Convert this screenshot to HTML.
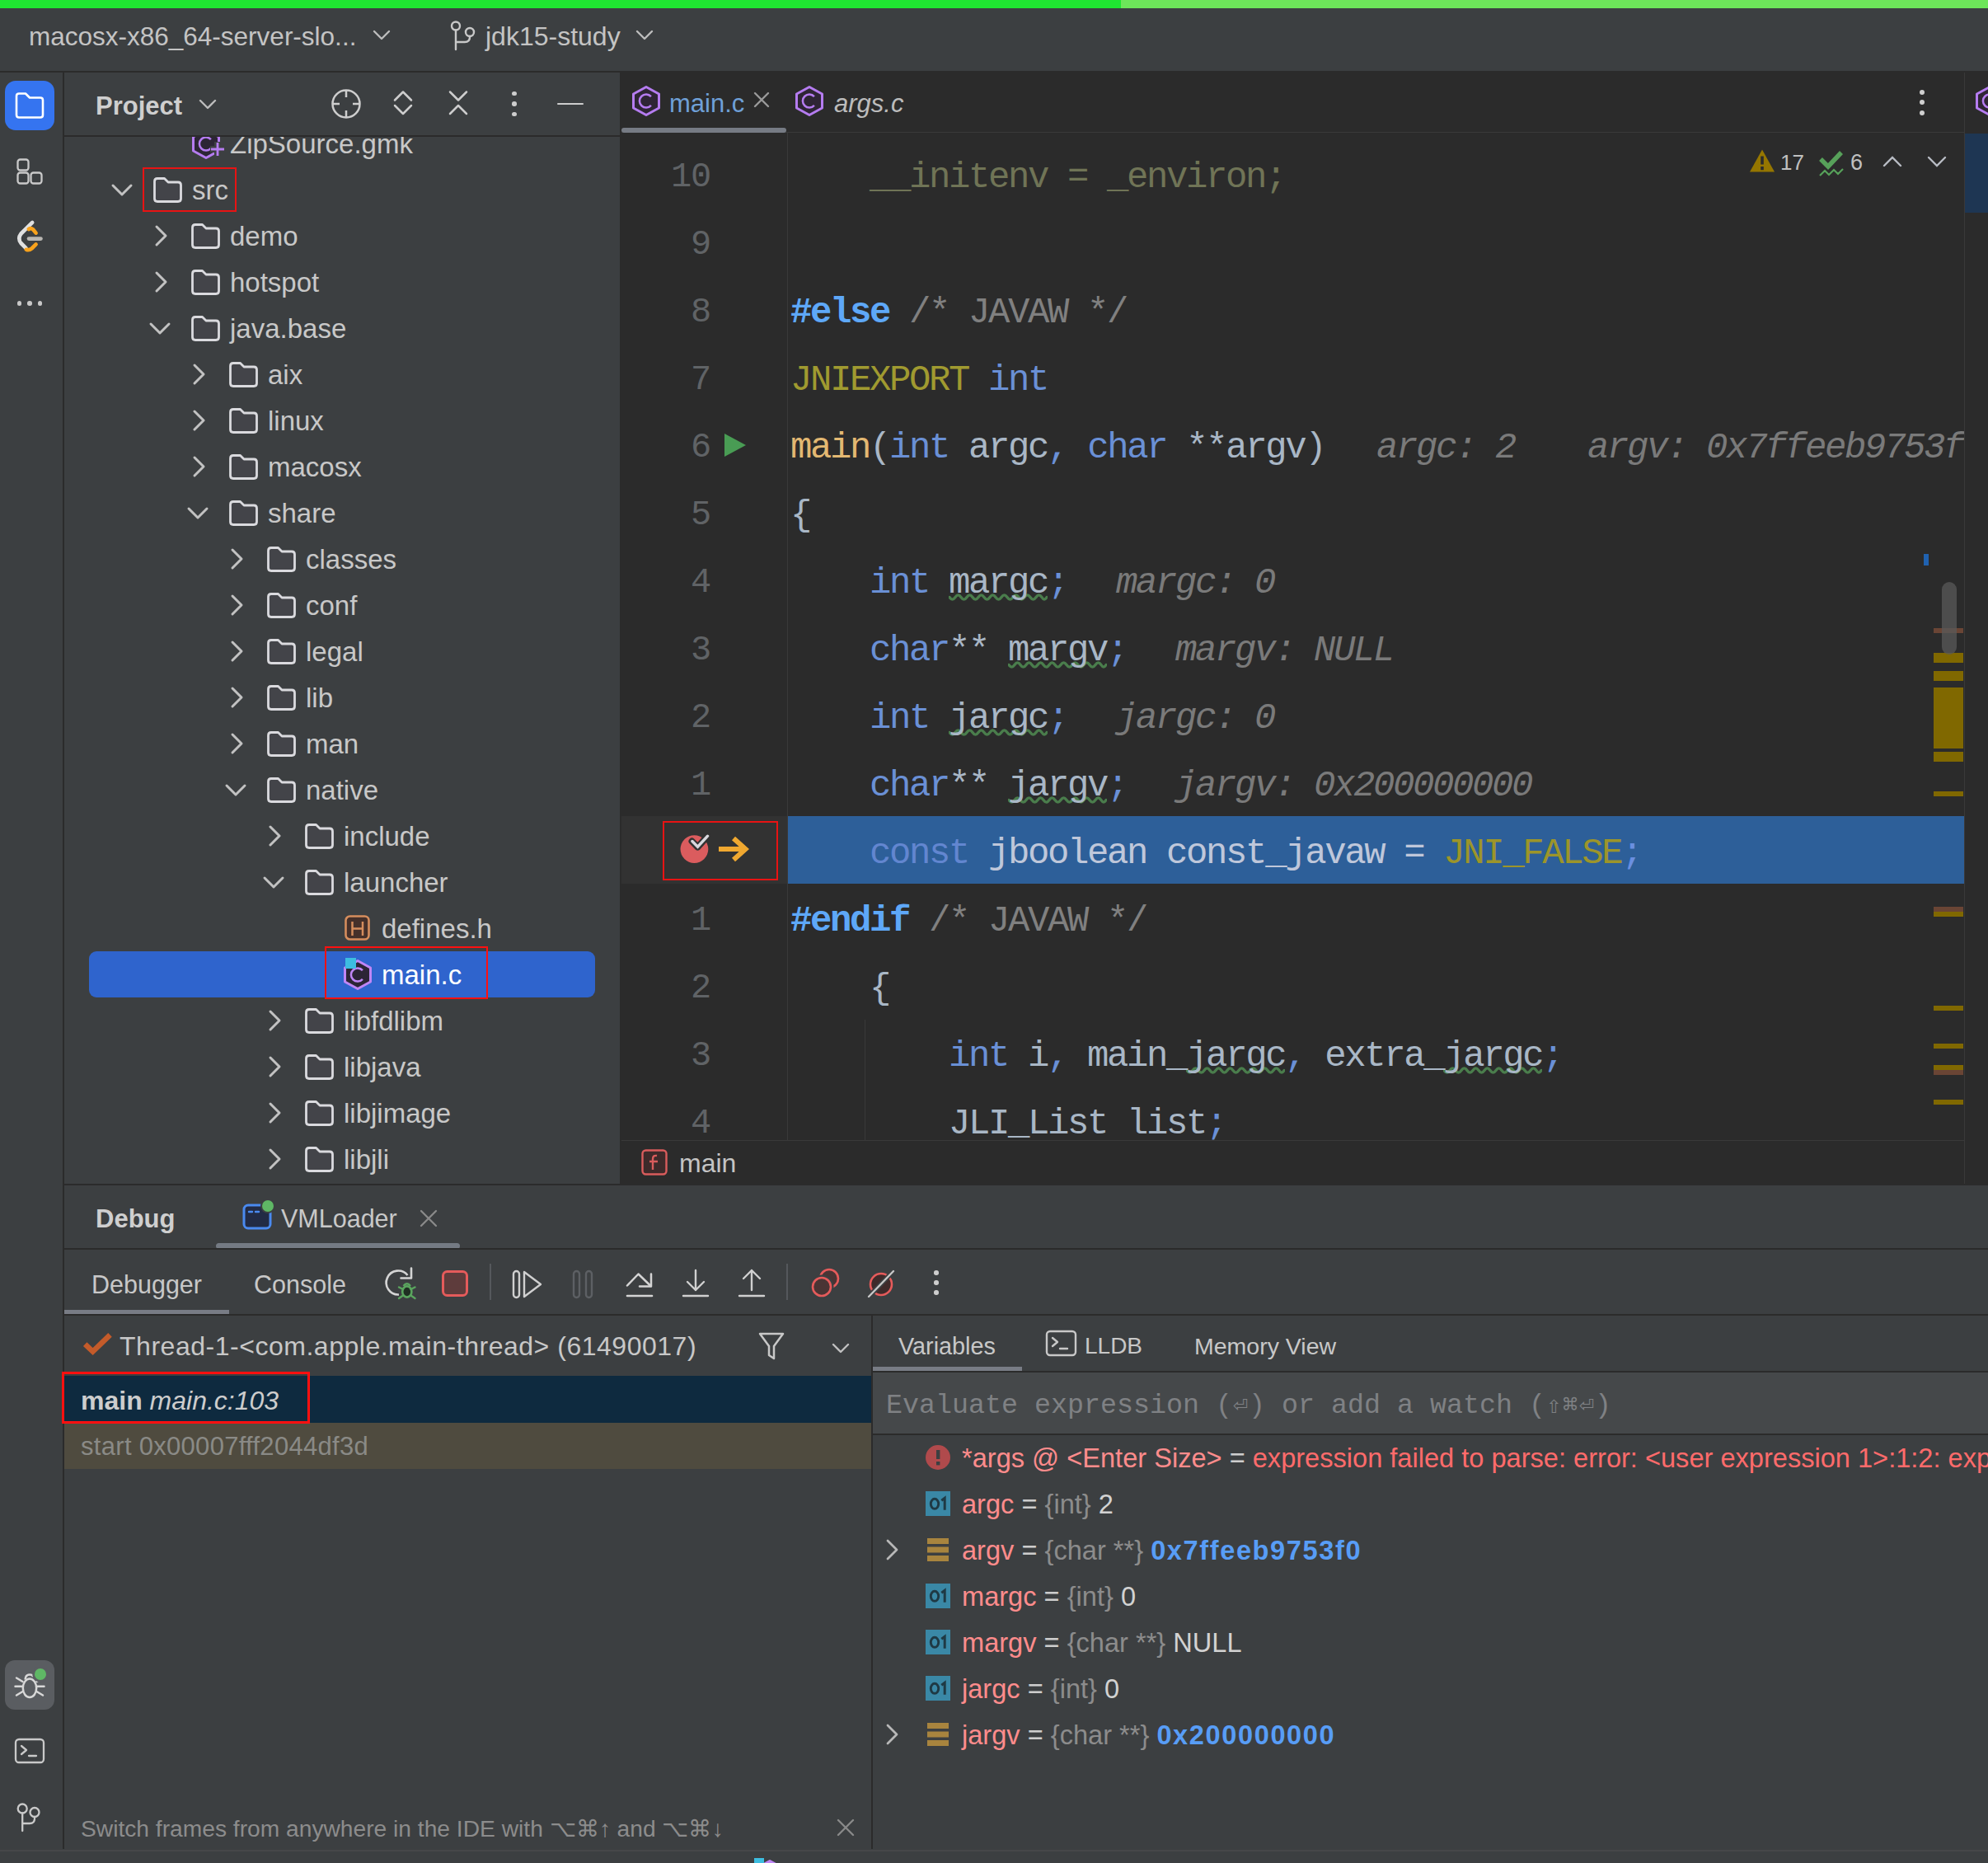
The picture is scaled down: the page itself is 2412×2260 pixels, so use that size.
<!DOCTYPE html>
<html><head><meta charset="utf-8"><style>
html,body{margin:0;padding:0;}
body{width:2412px;height:2260px;overflow:hidden;position:relative;background:#3c3f41;font-family:'Liberation Sans', sans-serif;-webkit-font-smoothing:antialiased;}
.cl{position:absolute;left:205px;height:60px;line-height:60px;font-family:'Liberation Mono', monospace;font-size:44px;letter-spacing:-2.4px;white-space:pre;}
.ln{position:absolute;left:0;width:108px;text-align:right;height:60px;line-height:60px;font-family:'Liberation Mono', monospace;font-size:42px;letter-spacing:-1.2px;color:#606366;white-space:pre;}
.ln{left:754px;}
.sy{display:inline-block;width:20px;text-align:center;font-style:normal;font-size:30px;}
</style></head><body>
<div style="position:absolute;left:0px;top:0px;width:1360px;height:10px;background:#1fe631;"></div>
<div style="position:absolute;left:1360px;top:0px;width:1052px;height:10px;background:#6de55a;"></div>
<div style="position:absolute;left:0px;top:10px;width:2412px;height:76px;background:#3c3f41;"></div>
<div style="position:absolute;left:0px;top:86px;width:2412px;height:2px;background:#2b2b2b;"></div>
<div style="position:absolute;left:35px;top:24.0px;height:40px;line-height:40px;font-family:'Liberation Sans', sans-serif;font-size:31.5px;color:#c4c4c4;font-weight:normal;font-style:normal;white-space:pre;">macosx-x86_64-server-slo...</div>
<svg style="position:absolute;left:450.0px;top:33.5px;" width="26" height="17" viewBox="0 0 26 17" fill="none"><path d="M4 4 L13.0 13 L22 4" stroke="#bdbdbd" stroke-width="2.4" stroke-linecap="round" stroke-linejoin="round"/></svg>
<svg style="position:absolute;left:544px;top:24px;" width="34" height="38" viewBox="0 0 34 38" fill="none"><circle cx="9" cy="7.5" r="5" stroke="#c8c8c8" stroke-width="2.4"/><circle cx="26" cy="15" r="5" stroke="#c8c8c8" stroke-width="2.4"/><path d="M9 12.5 V36 M9 27 H20 Q26 27 26 21 V20" stroke="#c8c8c8" stroke-width="2.4" stroke-linecap="round"/></svg>
<div style="position:absolute;left:589px;top:23.5px;height:41px;line-height:41px;font-family:'Liberation Sans', sans-serif;font-size:32px;color:#c4c4c4;font-weight:normal;font-style:normal;white-space:pre;">jdk15-study</div>
<svg style="position:absolute;left:769.0px;top:33.5px;" width="26" height="17" viewBox="0 0 26 17" fill="none"><path d="M4 4 L13.0 13 L22 4" stroke="#bdbdbd" stroke-width="2.4" stroke-linecap="round" stroke-linejoin="round"/></svg>
<div style="position:absolute;left:0px;top:88px;width:76px;height:2155px;background:#3c3f41;"></div>
<div style="position:absolute;left:76px;top:88px;width:2px;height:2155px;background:#2b2b2b;"></div>
<div style="position:absolute;left:6px;top:98px;width:60px;height:60px;background:#3574f0;border-radius:13px;"></div>
<svg style="position:absolute;left:16px;top:110px;" width="40" height="36" viewBox="0 0 40 36" fill="none"><path d="M4 6.5 Q4 3.5 7 3.5 H15 L20 8.5 H33 Q36 8.5 36 11.5 V29.5 Q36 32.5 33 32.5 H7 Q4 32.5 4 29.5 Z" stroke="#ffffff" stroke-width="2.6" stroke-linejoin="round"/></svg>
<svg style="position:absolute;left:18px;top:190px;" width="36" height="36" viewBox="0 0 36 36" fill="none"><rect x="3.5" y="3.5" width="13" height="13" rx="3" stroke="#c9c9c9" stroke-width="2.3"/><rect x="3.5" y="19.5" width="13" height="13" rx="3" stroke="#c9c9c9" stroke-width="2.3"/><rect x="19.5" y="19.5" width="13" height="13" rx="3" stroke="#c9c9c9" stroke-width="2.3"/></svg>
<svg style="position:absolute;left:16px;top:264px;" width="40" height="46" viewBox="0 0 40 46" fill="none"><path d="M23.2 5.9 L9.5 19.5 Q5 25.4 9.5 31 L15.5 37" stroke="#e0e0e0" stroke-width="4.6" stroke-linecap="round" stroke-linejoin="round"/><path d="M18.8 14 Q21.5 12.2 24 14.2 L27.6 18.6 M15.8 38.8 Q19.5 40 22.5 37.5 L27.6 32.4" stroke="#f8a21c" stroke-width="4.6" stroke-linecap="round"/><path d="M19 25.6 H33.5" stroke="#b8b6b2" stroke-width="4.6" stroke-linecap="round"/></svg>
<div style="position:absolute;left:20.7px;top:365.2px;width:5.6px;height:5.6px;background:#c8c8c8;border-radius:50%;"></div>
<div style="position:absolute;left:33.2px;top:365.2px;width:5.6px;height:5.6px;background:#c8c8c8;border-radius:50%;"></div>
<div style="position:absolute;left:45.7px;top:365.2px;width:5.6px;height:5.6px;background:#c8c8c8;border-radius:50%;"></div>
<div style="position:absolute;left:6px;top:2014px;width:60px;height:60px;background:#5a5d61;border-radius:12px;"></div>
<svg style="position:absolute;left:14px;top:2022px;" width="44" height="44" viewBox="0 0 44 44" fill="none"><ellipse cx="22" cy="25.8" rx="8.2" ry="11.2" stroke="#d8d8d8" stroke-width="2.5" fill="#5a5d61"/><path d="M16.5 15.5 Q17 9.5 22 9.5 Q25.5 9.5 26.5 12" stroke="#d8d8d8" stroke-width="2.5" fill="none"/><path d="M4.5 23.7 H13.5 M30.5 23.7 H39.5 M6 13.5 L13.5 18 M38 13.5 L30.5 18 M6 34.5 L13.5 30 M38 34.5 L30.5 30" stroke="#d8d8d8" stroke-width="2.5" stroke-linecap="round"/><circle cx="34.8" cy="9" r="9.5" fill="#5a5d61"/></svg>
<div style="position:absolute;left:41.8px;top:2024px;width:14px;height:14px;background:#5fb865;border-radius:50%;"></div>
<svg style="position:absolute;left:17px;top:2108px;" width="38" height="32" viewBox="0 0 38 32" fill="none"><rect x="2" y="2" width="34" height="28" rx="4" stroke="#c9c9c9" stroke-width="2.3"/><path d="M9 10 L15 15 L9 20 M18 22 H27" stroke="#c9c9c9" stroke-width="2.3" stroke-linecap="round" stroke-linejoin="round"/></svg>
<svg style="position:absolute;left:18px;top:2184px;" width="36" height="40" viewBox="0 0 36 40" fill="none"><circle cx="9.2" cy="10" r="5.5" stroke="#c9c9c9" stroke-width="2.3"/><circle cx="24" cy="14.5" r="5.5" stroke="#c9c9c9" stroke-width="2.3"/><path d="M9.2 15.5 V37 M9.2 28 H18 Q24 28 24 22 V20" stroke="#c9c9c9" stroke-width="2.3" stroke-linecap="round"/></svg>
<div style="position:absolute;left:78px;top:88px;width:674px;height:1348px;background:#3c3f41;"></div>
<div style="position:absolute;left:752px;top:88px;width:2px;height:1348px;background:#2b2b2b;"></div>
<div style="position:absolute;left:78px;top:166px;width:674px;height:1270px;overflow:hidden"><div style="position:absolute;left:-78px;top:-166px;width:800px;height:1500px"><svg style="position:absolute;left:231.5px;top:154.5px;" width="39" height="42" viewBox="0 0 39 42" fill="none"><polygon points="18.0,2.5 33.5,11.0 33.5,28.0 18.0,36.5 2.5,28.0 2.5,11.0" fill="#2c2535" stroke="#b57cf0" stroke-width="3" stroke-linejoin="round"/><path d="M23.9 14.2 A8.0 8.0 0 1 0 23.9 24.8" stroke="#b57cf0" stroke-width="2.5" stroke-linecap="butt"/></svg>
<svg style="position:absolute;left:253px;top:170px;" width="22" height="22" viewBox="0 0 22 22" fill="none"><path d="M11 2 V20 M2 11 H20" stroke="#3c3f41" stroke-width="8"/><path d="M11 3 V19 M3 11 H19" stroke="#b57cf0" stroke-width="2.8"/></svg>
<div style="position:absolute;left:279px;top:153.5px;height:42px;line-height:42px;font-family:'Liberation Sans', sans-serif;font-size:33px;color:#c8c8c8;font-weight:normal;font-style:normal;white-space:pre;">ZipSource.gmk</div>
<svg style="position:absolute;left:133.0px;top:220.5px;" width="30" height="19" viewBox="0 0 30 19" fill="none"><path d="M4 4 L15.0 15 L26 4" stroke="#c2c2c2" stroke-width="3" stroke-linecap="round" stroke-linejoin="round"/></svg>
<svg style="position:absolute;left:184px;top:213px;" width="40" height="34" viewBox="0 0 40 34" fill="none"><path d="M3.5 7 Q3.5 3.5 7 3.5 H15.5 L20 8 H32 Q35.5 8 35.5 11.5 V28 Q35.5 31.5 32 31.5 H7 Q3.5 31.5 3.5 28 Z" fill="#434449" stroke="#dadade" stroke-width="2.8" stroke-linejoin="round"/></svg>
<div style="position:absolute;left:233px;top:209.5px;height:42px;line-height:42px;font-family:'Liberation Sans', sans-serif;font-size:33px;color:#c8c8c8;font-weight:normal;font-style:normal;white-space:pre;">src</div>
<svg style="position:absolute;left:185.5px;top:271.0px;" width="19" height="30" viewBox="0 0 19 30" fill="none"><path d="M4 4 L15 15.0 L4 26" stroke="#c2c2c2" stroke-width="3" stroke-linecap="round" stroke-linejoin="round"/></svg>
<svg style="position:absolute;left:230px;top:269px;" width="40" height="34" viewBox="0 0 40 34" fill="none"><path d="M3.5 7 Q3.5 3.5 7 3.5 H15.5 L20 8 H32 Q35.5 8 35.5 11.5 V28 Q35.5 31.5 32 31.5 H7 Q3.5 31.5 3.5 28 Z" fill="#434449" stroke="#dadade" stroke-width="2.8" stroke-linejoin="round"/></svg>
<div style="position:absolute;left:279px;top:265.5px;height:42px;line-height:42px;font-family:'Liberation Sans', sans-serif;font-size:33px;color:#c8c8c8;font-weight:normal;font-style:normal;white-space:pre;">demo</div>
<svg style="position:absolute;left:185.5px;top:327.0px;" width="19" height="30" viewBox="0 0 19 30" fill="none"><path d="M4 4 L15 15.0 L4 26" stroke="#c2c2c2" stroke-width="3" stroke-linecap="round" stroke-linejoin="round"/></svg>
<svg style="position:absolute;left:230px;top:325px;" width="40" height="34" viewBox="0 0 40 34" fill="none"><path d="M3.5 7 Q3.5 3.5 7 3.5 H15.5 L20 8 H32 Q35.5 8 35.5 11.5 V28 Q35.5 31.5 32 31.5 H7 Q3.5 31.5 3.5 28 Z" fill="#434449" stroke="#dadade" stroke-width="2.8" stroke-linejoin="round"/></svg>
<div style="position:absolute;left:279px;top:321.5px;height:42px;line-height:42px;font-family:'Liberation Sans', sans-serif;font-size:33px;color:#c8c8c8;font-weight:normal;font-style:normal;white-space:pre;">hotspot</div>
<svg style="position:absolute;left:179.0px;top:388.5px;" width="30" height="19" viewBox="0 0 30 19" fill="none"><path d="M4 4 L15.0 15 L26 4" stroke="#c2c2c2" stroke-width="3" stroke-linecap="round" stroke-linejoin="round"/></svg>
<svg style="position:absolute;left:230px;top:381px;" width="40" height="34" viewBox="0 0 40 34" fill="none"><path d="M3.5 7 Q3.5 3.5 7 3.5 H15.5 L20 8 H32 Q35.5 8 35.5 11.5 V28 Q35.5 31.5 32 31.5 H7 Q3.5 31.5 3.5 28 Z" fill="#434449" stroke="#dadade" stroke-width="2.8" stroke-linejoin="round"/></svg>
<div style="position:absolute;left:279px;top:377.5px;height:42px;line-height:42px;font-family:'Liberation Sans', sans-serif;font-size:33px;color:#c8c8c8;font-weight:normal;font-style:normal;white-space:pre;">java.base</div>
<svg style="position:absolute;left:231.5px;top:439.0px;" width="19" height="30" viewBox="0 0 19 30" fill="none"><path d="M4 4 L15 15.0 L4 26" stroke="#c2c2c2" stroke-width="3" stroke-linecap="round" stroke-linejoin="round"/></svg>
<svg style="position:absolute;left:276px;top:437px;" width="40" height="34" viewBox="0 0 40 34" fill="none"><path d="M3.5 7 Q3.5 3.5 7 3.5 H15.5 L20 8 H32 Q35.5 8 35.5 11.5 V28 Q35.5 31.5 32 31.5 H7 Q3.5 31.5 3.5 28 Z" fill="#434449" stroke="#dadade" stroke-width="2.8" stroke-linejoin="round"/></svg>
<div style="position:absolute;left:325px;top:433.5px;height:42px;line-height:42px;font-family:'Liberation Sans', sans-serif;font-size:33px;color:#c8c8c8;font-weight:normal;font-style:normal;white-space:pre;">aix</div>
<svg style="position:absolute;left:231.5px;top:495.0px;" width="19" height="30" viewBox="0 0 19 30" fill="none"><path d="M4 4 L15 15.0 L4 26" stroke="#c2c2c2" stroke-width="3" stroke-linecap="round" stroke-linejoin="round"/></svg>
<svg style="position:absolute;left:276px;top:493px;" width="40" height="34" viewBox="0 0 40 34" fill="none"><path d="M3.5 7 Q3.5 3.5 7 3.5 H15.5 L20 8 H32 Q35.5 8 35.5 11.5 V28 Q35.5 31.5 32 31.5 H7 Q3.5 31.5 3.5 28 Z" fill="#434449" stroke="#dadade" stroke-width="2.8" stroke-linejoin="round"/></svg>
<div style="position:absolute;left:325px;top:489.5px;height:42px;line-height:42px;font-family:'Liberation Sans', sans-serif;font-size:33px;color:#c8c8c8;font-weight:normal;font-style:normal;white-space:pre;">linux</div>
<svg style="position:absolute;left:231.5px;top:551.0px;" width="19" height="30" viewBox="0 0 19 30" fill="none"><path d="M4 4 L15 15.0 L4 26" stroke="#c2c2c2" stroke-width="3" stroke-linecap="round" stroke-linejoin="round"/></svg>
<svg style="position:absolute;left:276px;top:549px;" width="40" height="34" viewBox="0 0 40 34" fill="none"><path d="M3.5 7 Q3.5 3.5 7 3.5 H15.5 L20 8 H32 Q35.5 8 35.5 11.5 V28 Q35.5 31.5 32 31.5 H7 Q3.5 31.5 3.5 28 Z" fill="#434449" stroke="#dadade" stroke-width="2.8" stroke-linejoin="round"/></svg>
<div style="position:absolute;left:325px;top:545.5px;height:42px;line-height:42px;font-family:'Liberation Sans', sans-serif;font-size:33px;color:#c8c8c8;font-weight:normal;font-style:normal;white-space:pre;">macosx</div>
<svg style="position:absolute;left:225.0px;top:612.5px;" width="30" height="19" viewBox="0 0 30 19" fill="none"><path d="M4 4 L15.0 15 L26 4" stroke="#c2c2c2" stroke-width="3" stroke-linecap="round" stroke-linejoin="round"/></svg>
<svg style="position:absolute;left:276px;top:605px;" width="40" height="34" viewBox="0 0 40 34" fill="none"><path d="M3.5 7 Q3.5 3.5 7 3.5 H15.5 L20 8 H32 Q35.5 8 35.5 11.5 V28 Q35.5 31.5 32 31.5 H7 Q3.5 31.5 3.5 28 Z" fill="#434449" stroke="#dadade" stroke-width="2.8" stroke-linejoin="round"/></svg>
<div style="position:absolute;left:325px;top:601.5px;height:42px;line-height:42px;font-family:'Liberation Sans', sans-serif;font-size:33px;color:#c8c8c8;font-weight:normal;font-style:normal;white-space:pre;">share</div>
<svg style="position:absolute;left:277.5px;top:663.0px;" width="19" height="30" viewBox="0 0 19 30" fill="none"><path d="M4 4 L15 15.0 L4 26" stroke="#c2c2c2" stroke-width="3" stroke-linecap="round" stroke-linejoin="round"/></svg>
<svg style="position:absolute;left:322px;top:661px;" width="40" height="34" viewBox="0 0 40 34" fill="none"><path d="M3.5 7 Q3.5 3.5 7 3.5 H15.5 L20 8 H32 Q35.5 8 35.5 11.5 V28 Q35.5 31.5 32 31.5 H7 Q3.5 31.5 3.5 28 Z" fill="#434449" stroke="#dadade" stroke-width="2.8" stroke-linejoin="round"/></svg>
<div style="position:absolute;left:371px;top:657.5px;height:42px;line-height:42px;font-family:'Liberation Sans', sans-serif;font-size:33px;color:#c8c8c8;font-weight:normal;font-style:normal;white-space:pre;">classes</div>
<svg style="position:absolute;left:277.5px;top:719.0px;" width="19" height="30" viewBox="0 0 19 30" fill="none"><path d="M4 4 L15 15.0 L4 26" stroke="#c2c2c2" stroke-width="3" stroke-linecap="round" stroke-linejoin="round"/></svg>
<svg style="position:absolute;left:322px;top:717px;" width="40" height="34" viewBox="0 0 40 34" fill="none"><path d="M3.5 7 Q3.5 3.5 7 3.5 H15.5 L20 8 H32 Q35.5 8 35.5 11.5 V28 Q35.5 31.5 32 31.5 H7 Q3.5 31.5 3.5 28 Z" fill="#434449" stroke="#dadade" stroke-width="2.8" stroke-linejoin="round"/></svg>
<div style="position:absolute;left:371px;top:713.5px;height:42px;line-height:42px;font-family:'Liberation Sans', sans-serif;font-size:33px;color:#c8c8c8;font-weight:normal;font-style:normal;white-space:pre;">conf</div>
<svg style="position:absolute;left:277.5px;top:775.0px;" width="19" height="30" viewBox="0 0 19 30" fill="none"><path d="M4 4 L15 15.0 L4 26" stroke="#c2c2c2" stroke-width="3" stroke-linecap="round" stroke-linejoin="round"/></svg>
<svg style="position:absolute;left:322px;top:773px;" width="40" height="34" viewBox="0 0 40 34" fill="none"><path d="M3.5 7 Q3.5 3.5 7 3.5 H15.5 L20 8 H32 Q35.5 8 35.5 11.5 V28 Q35.5 31.5 32 31.5 H7 Q3.5 31.5 3.5 28 Z" fill="#434449" stroke="#dadade" stroke-width="2.8" stroke-linejoin="round"/></svg>
<div style="position:absolute;left:371px;top:769.5px;height:42px;line-height:42px;font-family:'Liberation Sans', sans-serif;font-size:33px;color:#c8c8c8;font-weight:normal;font-style:normal;white-space:pre;">legal</div>
<svg style="position:absolute;left:277.5px;top:831.0px;" width="19" height="30" viewBox="0 0 19 30" fill="none"><path d="M4 4 L15 15.0 L4 26" stroke="#c2c2c2" stroke-width="3" stroke-linecap="round" stroke-linejoin="round"/></svg>
<svg style="position:absolute;left:322px;top:829px;" width="40" height="34" viewBox="0 0 40 34" fill="none"><path d="M3.5 7 Q3.5 3.5 7 3.5 H15.5 L20 8 H32 Q35.5 8 35.5 11.5 V28 Q35.5 31.5 32 31.5 H7 Q3.5 31.5 3.5 28 Z" fill="#434449" stroke="#dadade" stroke-width="2.8" stroke-linejoin="round"/></svg>
<div style="position:absolute;left:371px;top:825.5px;height:42px;line-height:42px;font-family:'Liberation Sans', sans-serif;font-size:33px;color:#c8c8c8;font-weight:normal;font-style:normal;white-space:pre;">lib</div>
<svg style="position:absolute;left:277.5px;top:887.0px;" width="19" height="30" viewBox="0 0 19 30" fill="none"><path d="M4 4 L15 15.0 L4 26" stroke="#c2c2c2" stroke-width="3" stroke-linecap="round" stroke-linejoin="round"/></svg>
<svg style="position:absolute;left:322px;top:885px;" width="40" height="34" viewBox="0 0 40 34" fill="none"><path d="M3.5 7 Q3.5 3.5 7 3.5 H15.5 L20 8 H32 Q35.5 8 35.5 11.5 V28 Q35.5 31.5 32 31.5 H7 Q3.5 31.5 3.5 28 Z" fill="#434449" stroke="#dadade" stroke-width="2.8" stroke-linejoin="round"/></svg>
<div style="position:absolute;left:371px;top:881.5px;height:42px;line-height:42px;font-family:'Liberation Sans', sans-serif;font-size:33px;color:#c8c8c8;font-weight:normal;font-style:normal;white-space:pre;">man</div>
<svg style="position:absolute;left:271.0px;top:948.5px;" width="30" height="19" viewBox="0 0 30 19" fill="none"><path d="M4 4 L15.0 15 L26 4" stroke="#c2c2c2" stroke-width="3" stroke-linecap="round" stroke-linejoin="round"/></svg>
<svg style="position:absolute;left:322px;top:941px;" width="40" height="34" viewBox="0 0 40 34" fill="none"><path d="M3.5 7 Q3.5 3.5 7 3.5 H15.5 L20 8 H32 Q35.5 8 35.5 11.5 V28 Q35.5 31.5 32 31.5 H7 Q3.5 31.5 3.5 28 Z" fill="#434449" stroke="#dadade" stroke-width="2.8" stroke-linejoin="round"/></svg>
<div style="position:absolute;left:371px;top:937.5px;height:42px;line-height:42px;font-family:'Liberation Sans', sans-serif;font-size:33px;color:#c8c8c8;font-weight:normal;font-style:normal;white-space:pre;">native</div>
<svg style="position:absolute;left:323.5px;top:999.0px;" width="19" height="30" viewBox="0 0 19 30" fill="none"><path d="M4 4 L15 15.0 L4 26" stroke="#c2c2c2" stroke-width="3" stroke-linecap="round" stroke-linejoin="round"/></svg>
<svg style="position:absolute;left:368px;top:997px;" width="40" height="34" viewBox="0 0 40 34" fill="none"><path d="M3.5 7 Q3.5 3.5 7 3.5 H15.5 L20 8 H32 Q35.5 8 35.5 11.5 V28 Q35.5 31.5 32 31.5 H7 Q3.5 31.5 3.5 28 Z" fill="#434449" stroke="#dadade" stroke-width="2.8" stroke-linejoin="round"/></svg>
<div style="position:absolute;left:417px;top:993.5px;height:42px;line-height:42px;font-family:'Liberation Sans', sans-serif;font-size:33px;color:#c8c8c8;font-weight:normal;font-style:normal;white-space:pre;">include</div>
<svg style="position:absolute;left:317.0px;top:1060.5px;" width="30" height="19" viewBox="0 0 30 19" fill="none"><path d="M4 4 L15.0 15 L26 4" stroke="#c2c2c2" stroke-width="3" stroke-linecap="round" stroke-linejoin="round"/></svg>
<svg style="position:absolute;left:368px;top:1053px;" width="40" height="34" viewBox="0 0 40 34" fill="none"><path d="M3.5 7 Q3.5 3.5 7 3.5 H15.5 L20 8 H32 Q35.5 8 35.5 11.5 V28 Q35.5 31.5 32 31.5 H7 Q3.5 31.5 3.5 28 Z" fill="#434449" stroke="#dadade" stroke-width="2.8" stroke-linejoin="round"/></svg>
<div style="position:absolute;left:417px;top:1049.5px;height:42px;line-height:42px;font-family:'Liberation Sans', sans-serif;font-size:33px;color:#c8c8c8;font-weight:normal;font-style:normal;white-space:pre;">launcher</div>
<svg style="position:absolute;left:418px;top:1110px;" width="32" height="32" viewBox="0 0 32 32" fill="none"><rect x="1.5" y="1.5" width="28" height="28" rx="5" fill="#45302a" stroke="#d58d5d" stroke-width="2.6"/><path d="M9.5 8 V25 M22 8 V25 M9.5 16.5 H22" stroke="#d58d5d" stroke-width="2.5"/></svg>
<div style="position:absolute;left:463px;top:1105.5px;height:42px;line-height:42px;font-family:'Liberation Sans', sans-serif;font-size:33px;color:#c8c8c8;font-weight:normal;font-style:normal;white-space:pre;">defines.h</div>
<div style="position:absolute;left:108px;top:1154px;width:614px;height:56px;background:#2f64cd;border-radius:9px;"></div>
<svg style="position:absolute;left:415.5px;top:1163.0px;" width="39" height="42" viewBox="0 0 39 42" fill="none"><polygon points="18.0,2.5 33.5,11.0 33.5,28.0 18.0,36.5 2.5,28.0 2.5,11.0" fill="#2c2535" stroke="#bf86f5" stroke-width="3" stroke-linejoin="round"/><path d="M23.9 14.2 A8.0 8.0 0 1 0 23.9 24.8" stroke="#bf86f5" stroke-width="2.5" stroke-linecap="butt"/></svg>
<div style="position:absolute;left:419px;top:1162px;width:13px;height:13px;background:#3dbde0;"></div>
<div style="position:absolute;left:463px;top:1161.5px;height:42px;line-height:42px;font-family:'Liberation Sans', sans-serif;font-size:33px;color:#ffffff;font-weight:normal;font-style:normal;white-space:pre;">main.c</div>
<svg style="position:absolute;left:323.5px;top:1223.0px;" width="19" height="30" viewBox="0 0 19 30" fill="none"><path d="M4 4 L15 15.0 L4 26" stroke="#c2c2c2" stroke-width="3" stroke-linecap="round" stroke-linejoin="round"/></svg>
<svg style="position:absolute;left:368px;top:1221px;" width="40" height="34" viewBox="0 0 40 34" fill="none"><path d="M3.5 7 Q3.5 3.5 7 3.5 H15.5 L20 8 H32 Q35.5 8 35.5 11.5 V28 Q35.5 31.5 32 31.5 H7 Q3.5 31.5 3.5 28 Z" fill="#434449" stroke="#dadade" stroke-width="2.8" stroke-linejoin="round"/></svg>
<div style="position:absolute;left:417px;top:1217.5px;height:42px;line-height:42px;font-family:'Liberation Sans', sans-serif;font-size:33px;color:#c8c8c8;font-weight:normal;font-style:normal;white-space:pre;">libfdlibm</div>
<svg style="position:absolute;left:323.5px;top:1279.0px;" width="19" height="30" viewBox="0 0 19 30" fill="none"><path d="M4 4 L15 15.0 L4 26" stroke="#c2c2c2" stroke-width="3" stroke-linecap="round" stroke-linejoin="round"/></svg>
<svg style="position:absolute;left:368px;top:1277px;" width="40" height="34" viewBox="0 0 40 34" fill="none"><path d="M3.5 7 Q3.5 3.5 7 3.5 H15.5 L20 8 H32 Q35.5 8 35.5 11.5 V28 Q35.5 31.5 32 31.5 H7 Q3.5 31.5 3.5 28 Z" fill="#434449" stroke="#dadade" stroke-width="2.8" stroke-linejoin="round"/></svg>
<div style="position:absolute;left:417px;top:1273.5px;height:42px;line-height:42px;font-family:'Liberation Sans', sans-serif;font-size:33px;color:#c8c8c8;font-weight:normal;font-style:normal;white-space:pre;">libjava</div>
<svg style="position:absolute;left:323.5px;top:1335.0px;" width="19" height="30" viewBox="0 0 19 30" fill="none"><path d="M4 4 L15 15.0 L4 26" stroke="#c2c2c2" stroke-width="3" stroke-linecap="round" stroke-linejoin="round"/></svg>
<svg style="position:absolute;left:368px;top:1333px;" width="40" height="34" viewBox="0 0 40 34" fill="none"><path d="M3.5 7 Q3.5 3.5 7 3.5 H15.5 L20 8 H32 Q35.5 8 35.5 11.5 V28 Q35.5 31.5 32 31.5 H7 Q3.5 31.5 3.5 28 Z" fill="#434449" stroke="#dadade" stroke-width="2.8" stroke-linejoin="round"/></svg>
<div style="position:absolute;left:417px;top:1329.5px;height:42px;line-height:42px;font-family:'Liberation Sans', sans-serif;font-size:33px;color:#c8c8c8;font-weight:normal;font-style:normal;white-space:pre;">libjimage</div>
<svg style="position:absolute;left:323.5px;top:1391.0px;" width="19" height="30" viewBox="0 0 19 30" fill="none"><path d="M4 4 L15 15.0 L4 26" stroke="#c2c2c2" stroke-width="3" stroke-linecap="round" stroke-linejoin="round"/></svg>
<svg style="position:absolute;left:368px;top:1389px;" width="40" height="34" viewBox="0 0 40 34" fill="none"><path d="M3.5 7 Q3.5 3.5 7 3.5 H15.5 L20 8 H32 Q35.5 8 35.5 11.5 V28 Q35.5 31.5 32 31.5 H7 Q3.5 31.5 3.5 28 Z" fill="#434449" stroke="#dadade" stroke-width="2.8" stroke-linejoin="round"/></svg>
<div style="position:absolute;left:417px;top:1385.5px;height:42px;line-height:42px;font-family:'Liberation Sans', sans-serif;font-size:33px;color:#c8c8c8;font-weight:normal;font-style:normal;white-space:pre;">libjli</div>
</div></div>
<div style="position:absolute;left:78px;top:88px;width:674px;height:76px;background:#3c3f41;"></div>
<div style="position:absolute;left:78px;top:164px;width:674px;height:2px;background:#2b2b2b;"></div>
<div style="position:absolute;left:116px;top:109.0px;height:40px;line-height:40px;font-family:'Liberation Sans', sans-serif;font-size:31px;color:#cfcfcf;font-weight:bold;font-style:normal;white-space:pre;">Project</div>
<svg style="position:absolute;left:239.0px;top:117.5px;" width="26" height="17" viewBox="0 0 26 17" fill="none"><path d="M4 4 L13.0 13 L22 4" stroke="#bdbdbd" stroke-width="2.4" stroke-linecap="round" stroke-linejoin="round"/></svg>
<svg style="position:absolute;left:400px;top:104px;" width="40" height="44" viewBox="0 0 40 44" fill="none"><circle cx="20" cy="22" r="16.5" stroke="#cdcdcd" stroke-width="2.5"/><path d="M20 6 V14 M20 30 V38 M4 22 H12 M28 22 H36" stroke="#cdcdcd" stroke-width="2.5"/></svg>
<svg style="position:absolute;left:476px;top:104px;" width="26" height="44" viewBox="0 0 26 44" fill="none"><path d="M3 17.5 L13 7.5 L23 17.5 M3 24 L13 34 L23 24" stroke="#cdcdcd" stroke-width="2.5" stroke-linecap="round" stroke-linejoin="round"/></svg>
<svg style="position:absolute;left:543px;top:104px;" width="26" height="44" viewBox="0 0 26 44" fill="none"><path d="M3 7.5 L13 17.5 L23 7.5 M3 34 L13 24 L23 34" stroke="#cdcdcd" stroke-width="2.5" stroke-linecap="round" stroke-linejoin="round"/></svg>
<div style="position:absolute;left:621.3px;top:110.6px;width:5.4px;height:5.4px;background:#cdcdcd;border-radius:50%;"></div>
<div style="position:absolute;left:621.3px;top:123.3px;width:5.4px;height:5.4px;background:#cdcdcd;border-radius:50%;"></div>
<div style="position:absolute;left:621.3px;top:135.8px;width:5.4px;height:5.4px;background:#cdcdcd;border-radius:50%;"></div>
<div style="position:absolute;left:676px;top:124.8px;width:32px;height:2.5px;background:#cdcdcd;border-radius:1px;"></div>
<div style="position:absolute;left:173px;top:203px;width:114px;height:54px;background:transparent;border:2.5px solid #e81313;box-sizing:border-box;"></div>
<div style="position:absolute;left:394px;top:1148px;width:198px;height:64px;background:transparent;border:2.5px solid #ff1010;box-sizing:border-box;"></div>
<div style="position:absolute;left:754px;top:88px;width:1629px;height:1348px;background:#2b2b2b;"></div>
<div style="position:absolute;left:2383px;top:88px;width:1px;height:1348px;background:#393939;"></div>
<div style="position:absolute;left:2384px;top:88px;width:28px;height:1348px;background:#2b2b2b;"></div>
<div style="position:absolute;left:754px;top:160px;width:1629px;height:1px;background:#393939;"></div>
<svg style="position:absolute;left:766.0px;top:102.5px;" width="39" height="42" viewBox="0 0 39 42" fill="none"><polygon points="18.0,2.5 33.5,11.0 33.5,28.0 18.0,36.5 2.5,28.0 2.5,11.0" fill="#2e2535" stroke="#b57cf0" stroke-width="3" stroke-linejoin="round"/><path d="M23.9 14.2 A8.0 8.0 0 1 0 23.9 24.8" stroke="#b57cf0" stroke-width="2.5" stroke-linecap="butt"/></svg>
<div style="position:absolute;left:812px;top:105.5px;height:40px;line-height:40px;font-family:'Liberation Sans', sans-serif;font-size:31px;color:#6fa0d8;font-weight:normal;font-style:normal;white-space:pre;">main.c</div>
<svg style="position:absolute;left:913px;top:110px;" width="22" height="22" viewBox="0 0 22 22" fill="none"><path d="M3 3 L19 19 M19 3 L3 19" stroke="#9a9a9a" stroke-width="2.4" stroke-linecap="round"/></svg>
<div style="position:absolute;left:754px;top:155px;width:200px;height:6px;background:#767b84;border-radius:3px;"></div>
<svg style="position:absolute;left:964.0px;top:102.5px;" width="39" height="42" viewBox="0 0 39 42" fill="none"><polygon points="18.0,2.5 33.5,11.0 33.5,28.0 18.0,36.5 2.5,28.0 2.5,11.0" fill="#2e2535" stroke="#b57cf0" stroke-width="3" stroke-linejoin="round"/><path d="M23.9 14.2 A8.0 8.0 0 1 0 23.9 24.8" stroke="#b57cf0" stroke-width="2.5" stroke-linecap="butt"/></svg>
<div style="position:absolute;left:1012px;top:105.5px;height:40px;line-height:40px;font-family:'Liberation Sans', sans-serif;font-size:31px;color:#bcbcbc;font-weight:normal;font-style:italic;white-space:pre;">args.c</div>
<div style="position:absolute;left:2329px;top:108.5px;width:6px;height:6px;background:#cfcfcf;border-radius:50%;"></div>
<div style="position:absolute;left:2329px;top:121px;width:6px;height:6px;background:#cfcfcf;border-radius:50%;"></div>
<div style="position:absolute;left:2329px;top:133.5px;width:6px;height:6px;background:#cfcfcf;border-radius:50%;"></div>
<svg style="position:absolute;left:2396.0px;top:102.5px;" width="39" height="42" viewBox="0 0 39 42" fill="none"><polygon points="18.0,2.5 33.5,11.0 33.5,28.0 18.0,36.5 2.5,28.0 2.5,11.0" fill="#2e2535" stroke="#b57cf0" stroke-width="3" stroke-linejoin="round"/><path d="M23.9 14.2 A8.0 8.0 0 1 0 23.9 24.8" stroke="#b57cf0" stroke-width="2.5" stroke-linecap="butt"/></svg>
<div style="position:absolute;left:2384px;top:162px;width:28px;height:96px;background:#1e3653;"></div>
<div style="position:absolute;left:754px;top:990px;width:201px;height:82px;background:#323232;"></div>
<div style="position:absolute;left:956px;top:990px;width:1427px;height:82px;background:#2d5f99;"></div>
<div style="position:absolute;left:955px;top:161px;width:1px;height:1222px;background:#393939;"></div>
<div style="position:absolute;left:1049px;top:1237px;width:1px;height:146px;background:#393939;"></div>
<div class="ln" style="top:185px">10</div>
<div class="ln" style="top:267px">9</div>
<div class="ln" style="top:349px">8</div>
<div class="ln" style="top:431px">7</div>
<div class="ln" style="top:513px">6</div>
<div class="ln" style="top:595px">5</div>
<div class="ln" style="top:677px">4</div>
<div class="ln" style="top:759px">3</div>
<div class="ln" style="top:841px">2</div>
<div class="ln" style="top:923px">1</div>
<div class="ln" style="top:1087px">1</div>
<div class="ln" style="top:1169px">2</div>
<div class="ln" style="top:1251px">3</div>
<div class="ln" style="top:1333px">4</div>
<svg style="position:absolute;left:876px;top:524px;" width="32" height="32" viewBox="0 0 32 32" fill="none"><path d="M3 2 L29 16 L3 30 Z" fill="#499c54"/></svg>
<svg style="position:absolute;left:822px;top:1010px;" width="44" height="40" viewBox="0 0 44 40" fill="none"><circle cx="20.4" cy="20.1" r="16.9" fill="#db5c5e"/><path d="M17.5 10.5 L24.5 17.6 L36.7 4" stroke="#323232" stroke-width="8" stroke-linecap="round" stroke-linejoin="round"/><path d="M17.9 10.5 L24.5 17.2 L36.5 4.2" stroke="#d8d8de" stroke-width="3.4" stroke-linecap="round" stroke-linejoin="miter"/></svg>
<svg style="position:absolute;left:870px;top:1014px;" width="42" height="34" viewBox="0 0 42 34" fill="none"><path d="M2 16 H34 M20 3 L34.5 16 L20 29" stroke="#f0a830" stroke-width="6" stroke-linecap="butt" stroke-linejoin="miter"/></svg>
<div style="position:absolute;left:804px;top:996px;width:140px;height:72px;background:transparent;border:2.5px solid #e81313;box-sizing:border-box;"></div>
<div style="position:absolute;left:754px;top:161px;width:1629px;height:1222px;overflow:hidden"><div style="position:absolute;left:0;top:-161px;width:1629px;height:1500px"><svg style="position:absolute;left:397px;top:719px;" width="120" height="11" viewBox="0 0 120 11" fill="none"><path d="M1 5.5 C3.4 9.0 5.5 9.0 8.0 5.5 C10.4 2.0 12.6 2.0 15.0 5.5 C17.4 9.0 19.6 9.0 22.0 5.5 C24.4 2.0 26.6 2.0 29.0 5.5 C31.4 9.0 33.5 9.0 36.0 5.5 C38.5 2.0 40.5 2.0 43.0 5.5 C45.5 9.0 47.5 9.0 50.0 5.5 C52.5 2.0 54.5 2.0 57.0 5.5 C59.5 9.0 61.5 9.0 64.0 5.5 C66.5 2.0 68.5 2.0 71.0 5.5 C73.5 9.0 75.5 9.0 78.0 5.5 C80.5 2.0 82.5 2.0 85.0 5.5 C87.5 9.0 89.5 9.0 92.0 5.5 C94.5 2.0 96.5 2.0 99.0 5.5 C101.5 9.0 103.5 9.0 106.0 5.5 C108.5 2.0 110.5 2.0 113.0 5.5 C115.1 9.0 116.9 9.0 119.0 5.5" stroke="#4a7d4c" stroke-width="3.4" stroke-linecap="round" fill="none"/></svg>
<svg style="position:absolute;left:469px;top:801px;" width="120" height="11" viewBox="0 0 120 11" fill="none"><path d="M1 5.5 C3.4 9.0 5.5 9.0 8.0 5.5 C10.4 2.0 12.6 2.0 15.0 5.5 C17.4 9.0 19.6 9.0 22.0 5.5 C24.4 2.0 26.6 2.0 29.0 5.5 C31.4 9.0 33.5 9.0 36.0 5.5 C38.5 2.0 40.5 2.0 43.0 5.5 C45.5 9.0 47.5 9.0 50.0 5.5 C52.5 2.0 54.5 2.0 57.0 5.5 C59.5 9.0 61.5 9.0 64.0 5.5 C66.5 2.0 68.5 2.0 71.0 5.5 C73.5 9.0 75.5 9.0 78.0 5.5 C80.5 2.0 82.5 2.0 85.0 5.5 C87.5 9.0 89.5 9.0 92.0 5.5 C94.5 2.0 96.5 2.0 99.0 5.5 C101.5 9.0 103.5 9.0 106.0 5.5 C108.5 2.0 110.5 2.0 113.0 5.5 C115.1 9.0 116.9 9.0 119.0 5.5" stroke="#4a7d4c" stroke-width="3.4" stroke-linecap="round" fill="none"/></svg>
<svg style="position:absolute;left:397px;top:883px;" width="120" height="11" viewBox="0 0 120 11" fill="none"><path d="M1 5.5 C3.4 9.0 5.5 9.0 8.0 5.5 C10.4 2.0 12.6 2.0 15.0 5.5 C17.4 9.0 19.6 9.0 22.0 5.5 C24.4 2.0 26.6 2.0 29.0 5.5 C31.4 9.0 33.5 9.0 36.0 5.5 C38.5 2.0 40.5 2.0 43.0 5.5 C45.5 9.0 47.5 9.0 50.0 5.5 C52.5 2.0 54.5 2.0 57.0 5.5 C59.5 9.0 61.5 9.0 64.0 5.5 C66.5 2.0 68.5 2.0 71.0 5.5 C73.5 9.0 75.5 9.0 78.0 5.5 C80.5 2.0 82.5 2.0 85.0 5.5 C87.5 9.0 89.5 9.0 92.0 5.5 C94.5 2.0 96.5 2.0 99.0 5.5 C101.5 9.0 103.5 9.0 106.0 5.5 C108.5 2.0 110.5 2.0 113.0 5.5 C115.1 9.0 116.9 9.0 119.0 5.5" stroke="#4a7d4c" stroke-width="3.4" stroke-linecap="round" fill="none"/></svg>
<svg style="position:absolute;left:469px;top:965px;" width="120" height="11" viewBox="0 0 120 11" fill="none"><path d="M1 5.5 C3.4 9.0 5.5 9.0 8.0 5.5 C10.4 2.0 12.6 2.0 15.0 5.5 C17.4 9.0 19.6 9.0 22.0 5.5 C24.4 2.0 26.6 2.0 29.0 5.5 C31.4 9.0 33.5 9.0 36.0 5.5 C38.5 2.0 40.5 2.0 43.0 5.5 C45.5 9.0 47.5 9.0 50.0 5.5 C52.5 2.0 54.5 2.0 57.0 5.5 C59.5 9.0 61.5 9.0 64.0 5.5 C66.5 2.0 68.5 2.0 71.0 5.5 C73.5 9.0 75.5 9.0 78.0 5.5 C80.5 2.0 82.5 2.0 85.0 5.5 C87.5 9.0 89.5 9.0 92.0 5.5 C94.5 2.0 96.5 2.0 99.0 5.5 C101.5 9.0 103.5 9.0 106.0 5.5 C108.5 2.0 110.5 2.0 113.0 5.5 C115.1 9.0 116.9 9.0 119.0 5.5" stroke="#4a7d4c" stroke-width="3.4" stroke-linecap="round" fill="none"/></svg>
<svg style="position:absolute;left:685px;top:1293px;" width="120" height="11" viewBox="0 0 120 11" fill="none"><path d="M1 5.5 C3.4 9.0 5.5 9.0 8.0 5.5 C10.4 2.0 12.6 2.0 15.0 5.5 C17.4 9.0 19.6 9.0 22.0 5.5 C24.4 2.0 26.6 2.0 29.0 5.5 C31.4 9.0 33.5 9.0 36.0 5.5 C38.5 2.0 40.5 2.0 43.0 5.5 C45.5 9.0 47.5 9.0 50.0 5.5 C52.5 2.0 54.5 2.0 57.0 5.5 C59.5 9.0 61.5 9.0 64.0 5.5 C66.5 2.0 68.5 2.0 71.0 5.5 C73.5 9.0 75.5 9.0 78.0 5.5 C80.5 2.0 82.5 2.0 85.0 5.5 C87.5 9.0 89.5 9.0 92.0 5.5 C94.5 2.0 96.5 2.0 99.0 5.5 C101.5 9.0 103.5 9.0 106.0 5.5 C108.5 2.0 110.5 2.0 113.0 5.5 C115.1 9.0 116.9 9.0 119.0 5.5" stroke="#4a7d4c" stroke-width="3.4" stroke-linecap="round" fill="none"/></svg>
<svg style="position:absolute;left:997px;top:1293px;" width="120" height="11" viewBox="0 0 120 11" fill="none"><path d="M1 5.5 C3.4 9.0 5.5 9.0 8.0 5.5 C10.4 2.0 12.6 2.0 15.0 5.5 C17.4 9.0 19.6 9.0 22.0 5.5 C24.4 2.0 26.6 2.0 29.0 5.5 C31.4 9.0 33.5 9.0 36.0 5.5 C38.5 2.0 40.5 2.0 43.0 5.5 C45.5 9.0 47.5 9.0 50.0 5.5 C52.5 2.0 54.5 2.0 57.0 5.5 C59.5 9.0 61.5 9.0 64.0 5.5 C66.5 2.0 68.5 2.0 71.0 5.5 C73.5 9.0 75.5 9.0 78.0 5.5 C80.5 2.0 82.5 2.0 85.0 5.5 C87.5 9.0 89.5 9.0 92.0 5.5 C94.5 2.0 96.5 2.0 99.0 5.5 C101.5 9.0 103.5 9.0 106.0 5.5 C108.5 2.0 110.5 2.0 113.0 5.5 C115.1 9.0 116.9 9.0 119.0 5.5" stroke="#4a7d4c" stroke-width="3.4" stroke-linecap="round" fill="none"/></svg>
<div class="cl" style="top:185px"><span style="color:#707456;">    __initenv = _environ;</span></div>
<div class="cl" style="top:267px"></div>
<div class="cl" style="top:349px"><span style="color:#5ea8f8;font-weight:bold;">#else</span><span style="color:#808080;"> /* JAVAW */</span></div>
<div class="cl" style="top:431px"><span style="color:#a09a30;">JNIEXPORT</span><span style="color:#a9b7c6;"> </span><span style="color:#6a90d6;">int</span></div>
<div class="cl" style="top:513px"><span style="color:#e3b872;">main</span><span style="color:#a9b7c6;">(</span><span style="color:#6a90d6;">int</span><span style="color:#a9b7c6;"> argc</span><span style="color:#6a90d6;">,</span><span style="color:#a9b7c6;"> </span><span style="color:#6a90d6;">char</span><span style="color:#a9b7c6;"> **argv)</span></div>
<div class="cl" style="top:595px"><span style="color:#a9b7c6;">{</span></div>
<div class="cl" style="top:677px"><span style="color:#a9b7c6;">    </span><span style="color:#6a90d6;">int</span><span style="color:#a9b7c6;"> margc</span><span style="color:#6a90d6;">;</span></div>
<div class="cl" style="top:759px"><span style="color:#a9b7c6;">    </span><span style="color:#6a90d6;">char</span><span style="color:#a9b7c6;">** margv</span><span style="color:#6a90d6;">;</span></div>
<div class="cl" style="top:841px"><span style="color:#a9b7c6;">    </span><span style="color:#6a90d6;">int</span><span style="color:#a9b7c6;"> jargc</span><span style="color:#6a90d6;">;</span></div>
<div class="cl" style="top:923px"><span style="color:#a9b7c6;">    </span><span style="color:#6a90d6;">char</span><span style="color:#a9b7c6;">** jargv</span><span style="color:#6a90d6;">;</span></div>
<div class="cl" style="top:1005px"><span style="color:#a9b7c6;">    </span><span style="color:#6286d0;">const</span><span style="color:#bfc7da;"> jboolean const_javaw = </span><span style="color:#9c952a;">JNI_FALSE</span><span style="color:#6a8fe0;">;</span></div>
<div class="cl" style="top:1087px"><span style="color:#5ea8f8;font-weight:bold;">#endif</span><span style="color:#808080;"> /* JAVAW */</span></div>
<div class="cl" style="top:1169px"><span style="color:#a9b7c6;">    {</span></div>
<div class="cl" style="top:1251px"><span style="color:#a9b7c6;">        </span><span style="color:#6a90d6;">int</span><span style="color:#a9b7c6;"> i</span><span style="color:#6a90d6;">,</span><span style="color:#a9b7c6;"> main_jargc</span><span style="color:#6a90d6;">,</span><span style="color:#a9b7c6;"> extra_jargc</span><span style="color:#6a90d6;">;</span></div>
<div class="cl" style="top:1333px"><span style="color:#a9b7c6;">        JLI_List list</span><span style="color:#6a90d6;">;</span></div>
<div class="cl" style="top:513px;left:916px;color:#7a7a7a;font-style:italic">argc: 2</div>
<div class="cl" style="top:513px;left:1172px;color:#7a7a7a;font-style:italic">argv: 0x7ffeeb9753f0</div>
<div class="cl" style="top:677px;left:600px;color:#7a7a7a;font-style:italic">margc: 0</div>
<div class="cl" style="top:759px;left:672px;color:#7a7a7a;font-style:italic">margv: NULL</div>
<div class="cl" style="top:841px;left:600px;color:#7a7a7a;font-style:italic">jargc: 0</div>
<div class="cl" style="top:923px;left:672px;color:#7a7a7a;font-style:italic">jargv: 0x200000000</div>
</div></div>
<div style="position:absolute;left:2334px;top:672px;width:6px;height:14px;background:#2062b0;"></div>
<div style="position:absolute;left:2346px;top:762px;width:36px;height:6px;background:#6a4535;"></div>
<div style="position:absolute;left:2346px;top:792px;width:36px;height:12px;background:#806800;"></div>
<div style="position:absolute;left:2346px;top:814px;width:36px;height:12px;background:#806800;"></div>
<div style="position:absolute;left:2346px;top:834px;width:36px;height:74px;background:#806800;"></div>
<div style="position:absolute;left:2346px;top:912px;width:36px;height:12px;background:#806800;"></div>
<div style="position:absolute;left:2346px;top:959.5px;width:36px;height:6.5px;background:#806800;"></div>
<div style="position:absolute;left:2346px;top:1100px;width:36px;height:6px;background:#6a4535;"></div>
<div style="position:absolute;left:2346px;top:1106px;width:36px;height:6px;background:#806800;"></div>
<div style="position:absolute;left:2346px;top:1220px;width:36px;height:6px;background:#806800;"></div>
<div style="position:absolute;left:2346px;top:1266px;width:36px;height:6px;background:#806800;"></div>
<div style="position:absolute;left:2346px;top:1292px;width:36px;height:6px;background:#806800;"></div>
<div style="position:absolute;left:2346px;top:1298px;width:36px;height:6px;background:#6a4535;"></div>
<div style="position:absolute;left:2346px;top:1334px;width:36px;height:6px;background:#806800;"></div>
<div style="position:absolute;left:2356px;top:706px;width:18px;height:88px;background:rgba(90,90,90,0.75);border-radius:9px;"></div>
<svg style="position:absolute;left:2122px;top:180px;" width="32" height="30" viewBox="0 0 32 30" fill="none"><path d="M16 1.5 L31 28.5 H1 Z" fill="#957600"/><rect x="14.2" y="9.5" width="3.6" height="10" fill="#2b2b2b"/><rect x="14.2" y="22" width="3.6" height="4.2" fill="#2b2b2b"/></svg>
<div style="position:absolute;left:2160px;top:180.5px;height:33px;line-height:33px;font-family:'Liberation Sans', sans-serif;font-size:26px;color:#c0c0c0;font-weight:normal;font-style:normal;white-space:pre;">17</div>
<svg style="position:absolute;left:2206px;top:182px;" width="32" height="34" viewBox="0 0 32 34" fill="none"><path d="M3 11 L12 20 L28 3" stroke="#57a15a" stroke-width="5.5" stroke-linejoin="miter"/><path d="M2 31 L8 25 L13 30 L19 24 L24 29 L30 23" stroke="#57a15a" stroke-width="2.2" fill="none"/></svg>
<div style="position:absolute;left:2245px;top:179.5px;height:35px;line-height:35px;font-family:'Liberation Sans', sans-serif;font-size:27px;color:#c0c0c0;font-weight:normal;font-style:normal;white-space:pre;">6</div>
<svg style="position:absolute;left:2284px;top:188px;" width="24" height="16" viewBox="0 0 24 16" fill="none"><path d="M2 13 L12 3 L22 13" stroke="#b8bcc4" stroke-width="2.4" stroke-linecap="round"/></svg>
<svg style="position:absolute;left:2338px;top:188px;" width="24" height="16" viewBox="0 0 24 16" fill="none"><path d="M2 3 L12 13 L22 3" stroke="#b8bcc4" stroke-width="2.4" stroke-linecap="round"/></svg>
<div style="position:absolute;left:754px;top:1383px;width:1629px;height:1px;background:#393939;"></div>
<svg style="position:absolute;left:778px;top:1394px;" width="32" height="32" viewBox="0 0 32 32" fill="none"><rect x="1.5" y="1.5" width="29" height="29" rx="4" fill="#3d2a2a" stroke="#d95c5c" stroke-width="2.4"/><path d="M19 8 Q14 7 14 12 V25 M10 15 H20" stroke="#d95c5c" stroke-width="2.4"/></svg>
<div style="position:absolute;left:824px;top:1390.5px;height:41px;line-height:41px;font-family:'Liberation Sans', sans-serif;font-size:32px;color:#c4c4c4;font-weight:normal;font-style:normal;white-space:pre;">main</div>
<div style="position:absolute;left:78px;top:1436px;width:2334px;height:807px;background:#3c3f41;"></div>
<div style="position:absolute;left:78px;top:1436px;width:2334px;height:2px;background:#2b2b2b;"></div>
<div style="position:absolute;left:116px;top:1459.0px;height:40px;line-height:40px;font-family:'Liberation Sans', sans-serif;font-size:31px;color:#cfcfcf;font-weight:bold;font-style:normal;white-space:pre;">Debug</div>
<svg style="position:absolute;left:293px;top:1455px;" width="44" height="40" viewBox="0 0 44 40" fill="none"><rect x="3" y="7" width="32" height="28" rx="5" fill="#222b45" stroke="#4a8af0" stroke-width="3"/><path d="M9 15 H13 M17 15 H21" stroke="#4a8af0" stroke-width="2.4" stroke-linecap="round"/><circle cx="32" cy="8" r="9" fill="#3c3f41"/><circle cx="32" cy="8" r="7" fill="#5fb865"/></svg>
<div style="position:absolute;left:341px;top:1458.5px;height:39px;line-height:39px;font-family:'Liberation Sans', sans-serif;font-size:30.5px;color:#c8c8c8;font-weight:normal;font-style:normal;white-space:pre;">VMLoader</div>
<svg style="position:absolute;left:509px;top:1467px;" width="22" height="22" viewBox="0 0 22 22" fill="none"><path d="M2 2 L20 20 M20 2 L2 20" stroke="#8a8a8a" stroke-width="2.3" stroke-linecap="round"/></svg>
<div style="position:absolute;left:262px;top:1508px;width:296px;height:7px;background:#747a83;border-radius:4px;"></div>
<div style="position:absolute;left:78px;top:1514px;width:2334px;height:2px;background:#2b2b2b;"></div>
<div style="position:absolute;left:111px;top:1538.5px;height:39px;line-height:39px;font-family:'Liberation Sans', sans-serif;font-size:30.5px;color:#c8c8c8;font-weight:normal;font-style:normal;white-space:pre;">Debugger</div>
<div style="position:absolute;left:308px;top:1538.5px;height:39px;line-height:39px;font-family:'Liberation Sans', sans-serif;font-size:30.5px;color:#c8c8c8;font-weight:normal;font-style:normal;white-space:pre;">Console</div>
<div style="position:absolute;left:78px;top:1589px;width:200px;height:6px;background:#787c85;"></div>
<div style="position:absolute;left:78px;top:1594px;width:2334px;height:1.5px;background:#2b2b2b;"></div>
<svg style="position:absolute;left:464px;top:1534px;" width="46" height="46" viewBox="0 0 46 46" fill="none"><path d="M30.5 13 A14.5 14.5 0 1 0 20 36.5" stroke="#d4d4d4" stroke-width="2.6" fill="none"/><path d="M22.5 16.5 H35 V4.5" stroke="#d4d4d4" stroke-width="2.6" fill="none" stroke-linecap="round" stroke-linejoin="round"/><ellipse cx="29.8" cy="33" rx="5.6" ry="6.6" stroke="#5aa55e" stroke-width="2.6" fill="#1f2f22"/><path d="M25.5 26 Q29.8 20.5 34 26" stroke="#5aa55e" stroke-width="2.4" fill="none"/><path d="M20 27.5 L25 30 M20 41 L25 37.5 M39.5 27.5 L34.5 30 M39.5 41 L34.5 37.5" stroke="#5aa55e" stroke-width="2.4" stroke-linecap="round"/></svg>
<svg style="position:absolute;left:535px;top:1540px;" width="34" height="34" viewBox="0 0 34 34" fill="none"><rect x="2.5" y="2.5" width="29" height="29" rx="5" fill="#5e3c3c" stroke="#e55b5b" stroke-width="3"/></svg>
<div style="position:absolute;left:594px;top:1533px;width:2px;height:44px;background:#55585c;"></div>
<svg style="position:absolute;left:620px;top:1539px;" width="40" height="38" viewBox="0 0 40 38" fill="none"><rect x="3" y="3" width="7" height="32" rx="3.5" stroke="#d0d0d0" stroke-width="2.4"/><path d="M16 4 L36 19 L16 34 Z" stroke="#d0d0d0" stroke-width="2.4" stroke-linejoin="round"/></svg>
<svg style="position:absolute;left:694px;top:1539px;" width="30" height="38" viewBox="0 0 30 38" fill="none"><rect x="2" y="3" width="7" height="32" rx="3.5" stroke="#5d6064" stroke-width="2.4"/><rect x="17" y="3" width="7" height="32" rx="3.5" stroke="#5d6064" stroke-width="2.4"/></svg>
<svg style="position:absolute;left:756px;top:1538px;" width="40" height="40" viewBox="0 0 40 40" fill="none"><path d="M5 21.5 L18.5 7.5 L33.5 22" stroke="#d4d4d4" stroke-width="2.5" stroke-linecap="round" stroke-linejoin="round" fill="none"/><path d="M20 22.5 H34 V7.5" stroke="#d4d4d4" stroke-width="2.5" stroke-linecap="round" stroke-linejoin="round" fill="none"/><path d="M5 34 H35" stroke="#d4d4d4" stroke-width="2.6" stroke-linecap="round"/></svg>
<svg style="position:absolute;left:826px;top:1538px;" width="36" height="38" viewBox="0 0 36 38" fill="none"><path d="M18 3 V27 M8 17 L18 27 L28 17 M3 34 H33" stroke="#d0d0d0" stroke-width="2.4" stroke-linecap="round" stroke-linejoin="round" fill="none"/></svg>
<svg style="position:absolute;left:894px;top:1538px;" width="36" height="38" viewBox="0 0 36 38" fill="none"><path d="M18 27 V3 M8 13 L18 3 L28 13 M3 34 H33" stroke="#d0d0d0" stroke-width="2.4" stroke-linecap="round" stroke-linejoin="round" fill="none"/></svg>
<div style="position:absolute;left:954px;top:1533px;width:2px;height:44px;background:#55585c;"></div>
<svg style="position:absolute;left:982px;top:1537px;" width="40" height="40" viewBox="0 0 40 40" fill="none"><circle cx="24" cy="14" r="11" fill="#4a3434" stroke="#e55b5b" stroke-width="2.6"/><circle cx="15" cy="24" r="12" fill="#4a3434" stroke="#3c3f41" stroke-width="5"/><circle cx="15" cy="24" r="11" fill="#4a3434" stroke="#e55b5b" stroke-width="2.6"/></svg>
<svg style="position:absolute;left:1050px;top:1537px;" width="38" height="40" viewBox="0 0 38 40" fill="none"><circle cx="19" cy="21" r="13" fill="#3f2a2a" stroke="#e55b5b" stroke-width="2.6"/><path d="M4 36 L34 5" stroke="#3c3f41" stroke-width="6"/><path d="M4 36 L34 5" stroke="#c8c8c8" stroke-width="2.4" stroke-linecap="round"/></svg>
<div style="position:absolute;left:1133.2px;top:1541.2px;width:5.6px;height:5.6px;background:#cdcdcd;border-radius:50%;"></div>
<div style="position:absolute;left:1133.2px;top:1553.2px;width:5.6px;height:5.6px;background:#cdcdcd;border-radius:50%;"></div>
<div style="position:absolute;left:1133.2px;top:1565.2px;width:5.6px;height:5.6px;background:#cdcdcd;border-radius:50%;"></div>
<div style="position:absolute;left:1057px;top:1595px;width:2px;height:648px;background:#2b2b2b;"></div>
<svg style="position:absolute;left:98px;top:1613px;" width="42" height="40" viewBox="0 0 42 40" fill="none"><path d="M5.2 17.6 L14.6 26.5 L35.5 6.3" stroke="#c45b2a" stroke-width="6.5" stroke-linejoin="miter" fill="none"/></svg>
<div style="position:absolute;left:145px;top:1612.5px;height:41px;line-height:41px;font-family:'Liberation Sans', sans-serif;font-size:32px;color:#c8c8c8;font-weight:normal;font-style:normal;white-space:pre;letter-spacing:0.52px;">Thread-1-&lt;com.apple.main-thread&gt; (61490017)</div>
<svg style="position:absolute;left:918px;top:1613px;" width="36" height="40" viewBox="0 0 36 40" fill="none"><path d="M4 5 H32 L21 20 V35 L15 31 V20 Z" stroke="#c8c8c8" stroke-width="2.5" stroke-linejoin="round" fill="none"/></svg>
<svg style="position:absolute;left:1007.0px;top:1626.5px;" width="26" height="17" viewBox="0 0 26 17" fill="none"><path d="M4 4 L13.0 13 L22 4" stroke="#c0c0c0" stroke-width="2.4" stroke-linecap="round" stroke-linejoin="round"/></svg>
<div style="position:absolute;left:78px;top:1669px;width:979px;height:57px;background:#0e2a3f;"></div>
<div style="position:absolute;left:78px;top:1726px;width:979px;height:56px;background:#4f4b3f;"></div>
<div style="position:absolute;left:98px;top:1679px;height:40px;line-height:40px;font-family:'Liberation Sans', sans-serif;font-size:32px;color:#cdcdcd;white-space:pre"><b>main</b> <i>main.c:103</i></div>
<div style="position:absolute;left:98px;top:1735.0px;height:40px;line-height:40px;font-family:'Liberation Sans', sans-serif;font-size:31px;color:#8a8a86;font-weight:normal;font-style:normal;white-space:pre;letter-spacing:0.3px;">start 0x00007fff2044df3d</div>
<div style="position:absolute;left:75px;top:1664px;width:301px;height:63px;background:transparent;border:3px solid #ff1010;box-sizing:border-box;"></div>
<div style="position:absolute;left:98px;top:2200.0px;height:36px;line-height:36px;font-family:'Liberation Sans', sans-serif;font-size:28.2px;color:#8c8c8c;font-weight:normal;font-style:normal;white-space:pre;">Switch frames from anywhere in the IDE with ⌥⌘↑ and ⌥⌘↓</div>
<svg style="position:absolute;left:1015px;top:2206px;" width="24" height="22" viewBox="0 0 24 22" fill="none"><path d="M2 2 L20 20 M20 2 L2 20" stroke="#8a8a8a" stroke-width="2.3" stroke-linecap="round"/></svg>
<div style="position:absolute;left:1090px;top:1614.5px;height:37px;line-height:37px;font-family:'Liberation Sans', sans-serif;font-size:28.8px;color:#c8c8c8;font-weight:normal;font-style:normal;white-space:pre;">Variables</div>
<svg style="position:absolute;left:1268px;top:1612px;" width="40" height="36" viewBox="0 0 40 36" fill="none"><rect x="2" y="3" width="35" height="29" rx="4" stroke="#c8c8c8" stroke-width="2.4"/><path d="M9 11 L15 16 L9 21 M18 24 H27" stroke="#c8c8c8" stroke-width="2.4" stroke-linecap="round" stroke-linejoin="round"/></svg>
<div style="position:absolute;left:1316px;top:1615.0px;height:36px;line-height:36px;font-family:'Liberation Sans', sans-serif;font-size:28px;color:#c8c8c8;font-weight:normal;font-style:normal;white-space:pre;">LLDB</div>
<div style="position:absolute;left:1449px;top:1614.5px;height:37px;line-height:37px;font-family:'Liberation Sans', sans-serif;font-size:28.5px;color:#c8c8c8;font-weight:normal;font-style:normal;white-space:pre;">Memory View</div>
<div style="position:absolute;left:1059px;top:1658px;width:181px;height:6px;background:#787c85;"></div>
<div style="position:absolute;left:1059px;top:1663px;width:1353px;height:1.5px;background:#2b2b2b;"></div>
<div style="position:absolute;left:1059px;top:1665px;width:1353px;height:74px;background:#45484a;"></div>
<div style="position:absolute;left:1059px;top:1739px;width:1353px;height:1.5px;background:#2b2b2b;"></div>
<div style="position:absolute;left:1075px;top:1683.5px;height:43px;line-height:43px;font-family:'Liberation Mono', monospace;font-size:33.33px;color:#7f8184;font-weight:normal;font-style:normal;white-space:pre;">Evaluate expression (<i class="sy">⏎</i>) or add a watch (<i class="sy">⇧</i><i class="sy">⌘</i><i class="sy">⏎</i>)</div>
<svg style="position:absolute;left:1123px;top:1753px;" width="30" height="30" viewBox="0 0 30 30" fill="none"><circle cx="15" cy="15" r="15" fill="#b04a4c"/><rect x="13" y="6" width="4.4" height="11" fill="#3c3f41"/><rect x="13" y="20" width="4.4" height="4.4" fill="#3c3f41"/></svg>
<div style="position:absolute;left:1167px;top:1749px;height:40px;line-height:40px;font-family:'Liberation Sans', sans-serif;font-size:32.6px;white-space:pre"><span style="color:#ff8c8c">*args @ &lt;Enter Size&gt;</span><span style="color:#cdcdcd"> = </span><span style="color:#ff6b6b">expression failed to parse: error: &lt;user expression 1&gt;:1:2: expected expression</span></div>
<svg style="position:absolute;left:1123px;top:1809px;" width="30" height="30" viewBox="0 0 30 30" fill="none"><rect x="0" y="0" width="30" height="30" fill="#3a88a6"/><ellipse cx="11" cy="15.3" rx="4.7" ry="6" stroke="#1f3944" stroke-width="2.9" fill="none"/><path d="M23.2 22.8 V8.3 L19.3 11.2" stroke="#1f3944" stroke-width="3" fill="none" stroke-linejoin="miter"/></svg>
<div style="position:absolute;left:1167px;top:1805px;height:40px;line-height:40px;font-family:'Liberation Sans', sans-serif;font-size:32.6px;white-space:pre"><span style="color:#ff8c8c">argc</span><span style="color:#cdcdcd"> = </span><span style="color:#8c8c8c">{int}</span> <span style="color:#d2d2d2;">2</span></div>
<svg style="position:absolute;left:1125px;top:1866px;" width="26" height="28" viewBox="0 0 26 28" fill="none"><rect x="0" y="0" width="26" height="7" fill="#a8843e"/><rect x="0" y="10.5" width="26" height="7" fill="#a8843e"/><rect x="0" y="21" width="26" height="7" fill="#a8843e"/></svg>
<svg style="position:absolute;left:1072.5px;top:1865.0px;" width="19" height="30" viewBox="0 0 19 30" fill="none"><path d="M4 4 L15 15.0 L4 26" stroke="#b8b8b8" stroke-width="2.8" stroke-linecap="round" stroke-linejoin="round"/></svg>
<div style="position:absolute;left:1167px;top:1861px;height:40px;line-height:40px;font-family:'Liberation Sans', sans-serif;font-size:32.6px;white-space:pre"><span style="color:#ff8c8c">argv</span><span style="color:#cdcdcd"> = </span><span style="color:#8c8c8c">{char **}</span> <span style="color:#589df6;font-weight:bold;letter-spacing:1.6px;">0x7ffeeb9753f0</span></div>
<svg style="position:absolute;left:1123px;top:1921px;" width="30" height="30" viewBox="0 0 30 30" fill="none"><rect x="0" y="0" width="30" height="30" fill="#3a88a6"/><ellipse cx="11" cy="15.3" rx="4.7" ry="6" stroke="#1f3944" stroke-width="2.9" fill="none"/><path d="M23.2 22.8 V8.3 L19.3 11.2" stroke="#1f3944" stroke-width="3" fill="none" stroke-linejoin="miter"/></svg>
<div style="position:absolute;left:1167px;top:1917px;height:40px;line-height:40px;font-family:'Liberation Sans', sans-serif;font-size:32.6px;white-space:pre"><span style="color:#ff8c8c">margc</span><span style="color:#cdcdcd"> = </span><span style="color:#8c8c8c">{int}</span> <span style="color:#d2d2d2;">0</span></div>
<svg style="position:absolute;left:1123px;top:1977px;" width="30" height="30" viewBox="0 0 30 30" fill="none"><rect x="0" y="0" width="30" height="30" fill="#3a88a6"/><ellipse cx="11" cy="15.3" rx="4.7" ry="6" stroke="#1f3944" stroke-width="2.9" fill="none"/><path d="M23.2 22.8 V8.3 L19.3 11.2" stroke="#1f3944" stroke-width="3" fill="none" stroke-linejoin="miter"/></svg>
<div style="position:absolute;left:1167px;top:1973px;height:40px;line-height:40px;font-family:'Liberation Sans', sans-serif;font-size:32.6px;white-space:pre"><span style="color:#ff8c8c">margv</span><span style="color:#cdcdcd"> = </span><span style="color:#8c8c8c">{char **}</span> <span style="color:#d2d2d2;">NULL</span></div>
<svg style="position:absolute;left:1123px;top:2033px;" width="30" height="30" viewBox="0 0 30 30" fill="none"><rect x="0" y="0" width="30" height="30" fill="#3a88a6"/><ellipse cx="11" cy="15.3" rx="4.7" ry="6" stroke="#1f3944" stroke-width="2.9" fill="none"/><path d="M23.2 22.8 V8.3 L19.3 11.2" stroke="#1f3944" stroke-width="3" fill="none" stroke-linejoin="miter"/></svg>
<div style="position:absolute;left:1167px;top:2029px;height:40px;line-height:40px;font-family:'Liberation Sans', sans-serif;font-size:32.6px;white-space:pre"><span style="color:#ff8c8c">jargc</span><span style="color:#cdcdcd"> = </span><span style="color:#8c8c8c">{int}</span> <span style="color:#d2d2d2;">0</span></div>
<svg style="position:absolute;left:1125px;top:2090px;" width="26" height="28" viewBox="0 0 26 28" fill="none"><rect x="0" y="0" width="26" height="7" fill="#a8843e"/><rect x="0" y="10.5" width="26" height="7" fill="#a8843e"/><rect x="0" y="21" width="26" height="7" fill="#a8843e"/></svg>
<svg style="position:absolute;left:1072.5px;top:2089.0px;" width="19" height="30" viewBox="0 0 19 30" fill="none"><path d="M4 4 L15 15.0 L4 26" stroke="#b8b8b8" stroke-width="2.8" stroke-linecap="round" stroke-linejoin="round"/></svg>
<div style="position:absolute;left:1167px;top:2085px;height:40px;line-height:40px;font-family:'Liberation Sans', sans-serif;font-size:32.6px;white-space:pre"><span style="color:#ff8c8c">jargv</span><span style="color:#cdcdcd"> = </span><span style="color:#8c8c8c">{char **}</span> <span style="color:#589df6;font-weight:bold;letter-spacing:1.6px;">0x200000000</span></div>
<div style="position:absolute;left:0px;top:2243px;width:2412px;height:17px;background:#3c3f41;"></div>
<div style="position:absolute;left:0px;top:2244px;width:2412px;height:2px;background:#464749;"></div>
<div style="position:absolute;left:880px;top:2246px;width:100px;height:14px;overflow:hidden"><svg style="position:absolute;left:36.0px;top:8.5px;" width="39" height="42" viewBox="0 0 39 42" fill="none"><polygon points="18.0,2.5 33.5,11.0 33.5,28.0 18.0,36.5 2.5,28.0 2.5,11.0" fill="#2c2535" stroke="#bf86f5" stroke-width="3" stroke-linejoin="round"/><path d="M23.9 14.2 A8.0 8.0 0 1 0 23.9 24.8" stroke="#bf86f5" stroke-width="2.5" stroke-linecap="butt"/></svg>
</div>
<div style="position:absolute;left:915px;top:2254px;width:12px;height:6px;background:#3dbde0;"></div>
</body></html>
